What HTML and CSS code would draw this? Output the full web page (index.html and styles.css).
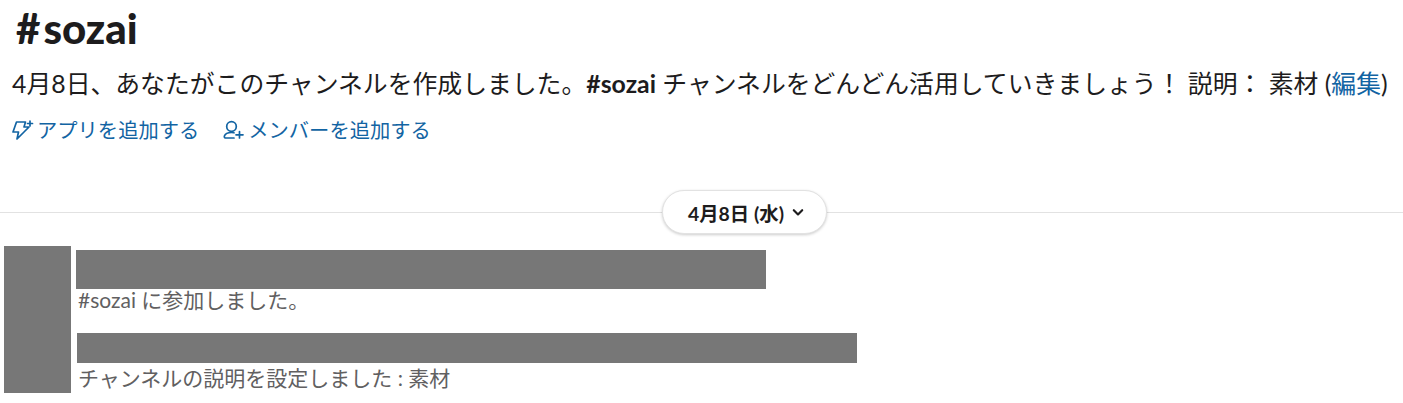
FILE: index.html
```html
<!DOCTYPE html>
<html lang="ja">
<head>
  <meta charset="UTF-8">
  <title>#sozai</title>
  <link rel="stylesheet" href="styles.css">
</head>
<body>
<div class="intro">
  <h1 class="title"><span class="hash">#</span>sozai</h1>
  <p class="desc">4月8日、あなたがこのチャンネルを作成しました。<b>#sozai</b> チャンネルをどんどん活用していきましょう！ 説明： 素材 (<a class="link">編集</a>)</p>
  <div class="actions">
    <a class="action">
      <svg class="icon" viewBox="0 0 22 22" fill="none" stroke="currentColor" stroke-width="1.7" stroke-linejoin="round" stroke-linecap="round">
        <path d="M4.500 3h9L12 8h5L5 20l1.500-7H1z"/>
        <path d="M18 2v5M15.500 4.500h5"/>
      </svg>
      アプリを追加する
    </a>
    <a class="action">
      <svg class="icon" viewBox="0 0 22 22" fill="none" stroke="currentColor" stroke-width="1.7" stroke-linecap="round">
        <circle cx="8.500" cy="7.500" r="4.800"/>
        <path d="M11 19H3c-1.300 0-2-.9-1.600-2 .8-2.300 3.600-3.500 7.100-3.500.9 0 1.800.1 2.500.3"/>
        <path d="M16.500 12.500v6.500M13 15.800h7"/>
      </svg>
      メンバーを追加する
    </a>
  </div>
</div>

<div class="divider">
  <button class="date">4月8日 (水)
    <svg class="chev" viewBox="0 0 10 10" fill="none" stroke="currentColor" stroke-width="1.800" stroke-linecap="round" stroke-linejoin="round"><path d="M1.500 3.500 5 7l3.500-3.500"/></svg>
  </button>
</div>

<div class="msgs">
  <div class="avatar"></div>
  <div class="list">
    <div class="msg">
      <div class="redact redact1"></div>
      <div class="text text1">#sozai に参加しました。</div>
    </div>
    <div class="msg msg2">
      <div class="redact redact2"></div>
      <div class="text text2">チャンネルの説明を設定しました : 素材</div>
    </div>
  </div>
</div>
</body>
</html>
```

FILE: styles.css
```css
* {
  margin: 0;
  padding: 0;
  box-sizing: border-box;
}

body {
  font-family: Lato, "Noto Sans CJK JP", sans-serif;
  color: #1d1c1d;
  background: #fff;
  height: 403px;
  overflow: hidden;
}

.intro {
  padding: 0 12px;
  height: 190px;
}

.title {
  font-size: 42px;
  line-height: 56px;
  font-weight: 900;
  padding-left: 4px;
}

.hash {
  margin-right: 3px;
}

.desc {
  font-size: 24.83px;
  line-height: 32px;
  margin-top: 11px;
  white-space: nowrap;
}

.link {
  color: #1264a3;
}

.actions {
  display: flex;
  gap: 24px;
  margin-top: 17px;
}

.action {
  display: flex;
  align-items: center;
  gap: 3px;
  color: #1264a3;
  font-size: 20.3px;
  line-height: 28px;
}

.icon {
  width: 22px;
  height: 22px;
}

.divider {
  height: 44px;
  display: flex;
  justify-content: center;
  align-items: center;
  background: linear-gradient(#e2e2e2, #e2e2e2) center / 100% 1px no-repeat;
}

.date {
  display: flex;
  align-items: center;
  gap: 8px;
  height: 44px;
  padding: 0 22px 0 25px;
  margin-left: 86px;
  background: #fff;
  border: 1px solid #e2e2e2;
  border-radius: 22px;
  box-shadow: 0 1px 3px rgba(0, 0, 0, .2);
  font-family: inherit;
  font-size: 19.4px;
  font-weight: 700;
  color: #1d1c1d;
}

.chev {
  width: 12px;
  height: 12px;
}

.msgs {
  display: flex;
  gap: 5px;
  padding: 12px 0 0 4px;
}

.avatar {
  width: 67px;
  height: 147px;
  background: #777;
}

.list {
  padding-top: 4px;
}

.redact {
  background: #777;
}

.redact1 {
  width: 690px;
  height: 39px;
}

.redact2 {
  width: 780px;
  height: 30px;
  margin-left: 1px;
}

.msg2 {
  margin-top: 22px;
}

.text {
  font-size: 21px;
  color: #616061;
  padding-left: 2px;
}

.text1 {
  line-height: 22px;
}

.text2 {
  line-height: 30px;
}
```
